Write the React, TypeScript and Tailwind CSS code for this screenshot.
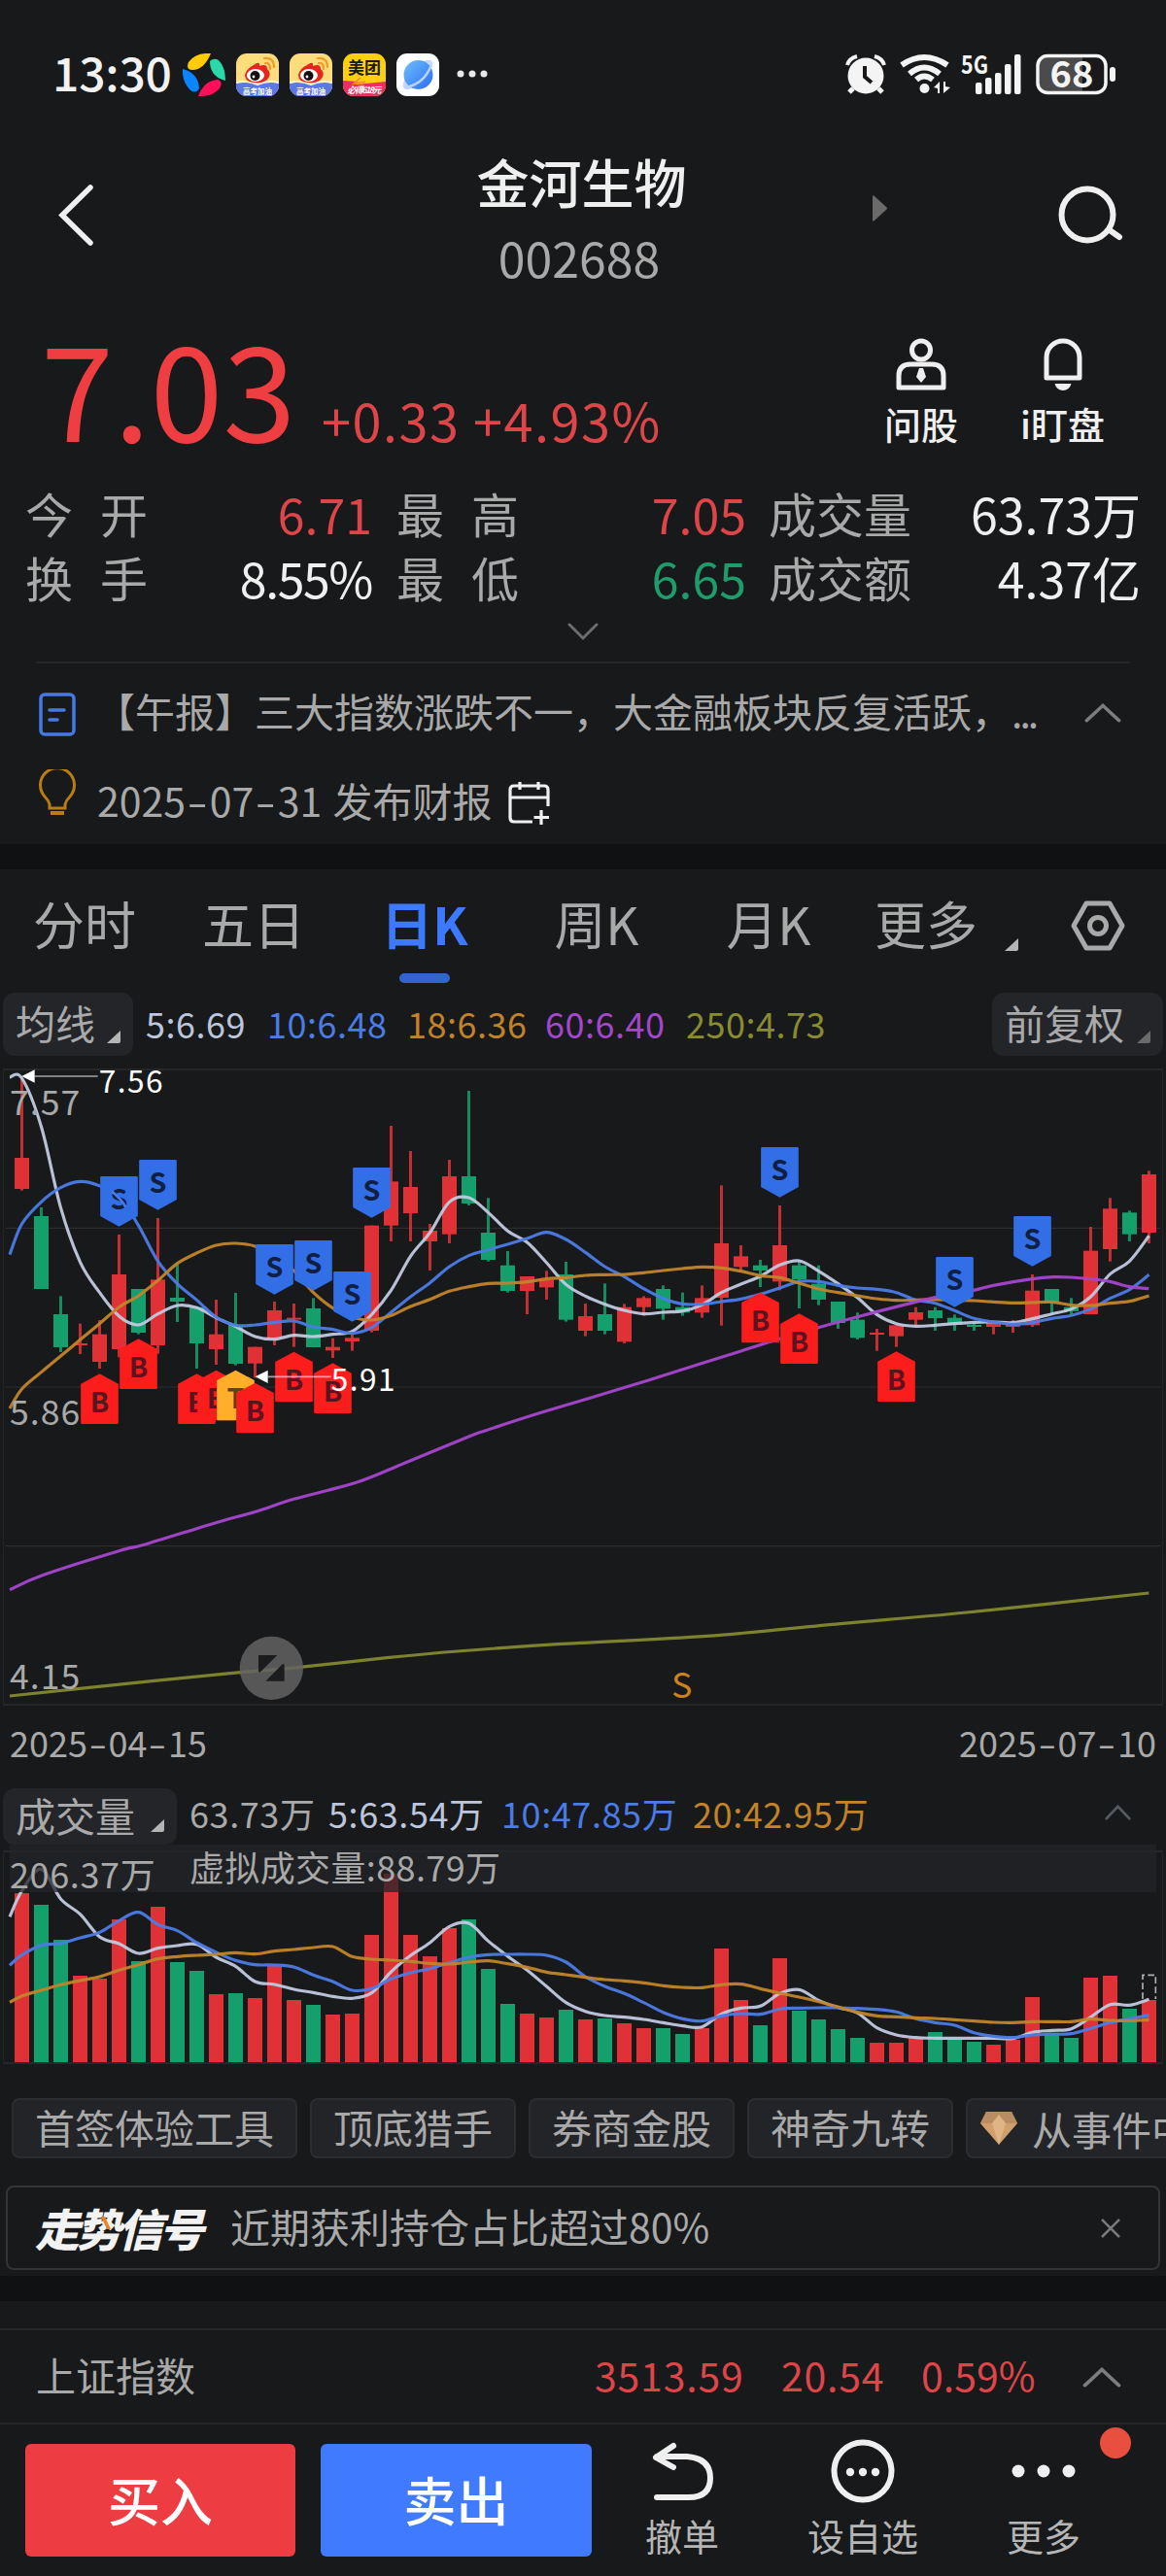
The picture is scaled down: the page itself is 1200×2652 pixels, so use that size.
import React from 'react';

const RED = '#e03236';
const GREEN = '#149f6c';

// Chart units: 3 per CSS pixel, one candle every 60 units
const STEP = 60;
const FIRST = 67.5;
const cx = (i: number) => FIRST + i * STEP;

type Candle = ['r' | 'g', number, number, number, number];

// [colour, high, body top, body bottom, low]
const candles: Candle[] = [
  ['r', 90, 336, 432, 437], ['g', 489, 516, 741, 741], ['g', 763, 819, 921, 936], ['r', 848, 909, 915, 942],
  ['r', 837, 881, 966, 987], ['r', 573, 696, 927, 952], ['g', 741, 741, 876, 881], ['r', 522, 712, 915, 941],
  ['g', 660, 768, 780, 843], ['g', 795, 797, 909, 987], ['r', 774, 881, 927, 975], ['g', 753, 852, 972, 977],
  ['r', 920, 920, 971, 1015], ['r', 780, 807, 893, 915], ['r', 786, 830, 836, 920], ['g', 769, 801, 921, 921],
  ['r', 893, 920, 931, 954], ['r', 880, 892, 903, 932], ['r', 545, 545, 870, 875], ['r', 237, 409, 545, 594],
  ['r', 315, 426, 507, 594], ['r', 540, 561, 594, 684], ['r', 342, 393, 572, 600], ['g', 129, 393, 477, 483],
  ['g', 460, 567, 651, 656], ['g', 624, 668, 747, 752], ['r', 702, 702, 747, 819], ['r', 685, 713, 736, 774],
  ['g', 657, 696, 836, 842], ['r', 786, 825, 870, 887], ['g', 724, 819, 870, 881], ['r', 787, 797, 904, 909],
  ['r', 763, 769, 797, 824], ['g', 730, 741, 802, 836], ['g', 752, 797, 814, 824], ['r', 730, 769, 814, 830],
  ['r', 421, 600, 768, 854], ['r', 606, 640, 673, 690], ['g', 651, 668, 684, 735], ['r', 483, 606, 718, 745],
  ['g', 655, 668, 712, 801], ['g', 668, 725, 774, 791], ['g', 780, 780, 846, 864], ['g', 814, 836, 892, 897],
  ['r', 864, 876, 882, 932], ['r', 850, 853, 887, 920], ['r', 797, 813, 836, 852], ['g', 797, 807, 831, 870],
  ['g', 820, 830, 852, 870], ['g', 840, 852, 858, 870], ['r', 840, 845, 858, 881], ['r', 837, 852, 858, 876],
  ['r', 696, 746, 853, 858], ['g', 741, 741, 785, 820], ['g', 769, 797, 810, 820], ['r', 549, 623, 819, 819],
  ['r', 460, 493, 618, 656], ['g', 499, 505, 572, 594], ['r', 376, 387, 567, 600],
];

// moving averages, first value sits on the left edge of the plot
const ma5 = [87, 90, 240, 490, 658, 752, 825, 852, 818, 792, 799, 830, 857, 888, 896, 884, 888, 881, 872, 820, 745, 640, 567, 472, 459, 505, 562, 597, 660, 727, 763, 788, 807, 818, 813, 809, 790, 752, 726, 702, 667, 654, 686, 725, 768, 820, 848, 856, 853, 848, 844, 843, 845, 833, 818, 803, 765, 695, 655, 577];
const ma10 = [635, 540, 472, 428, 409, 422, 455, 545, 655, 725, 775, 828, 853, 852, 844, 840, 858, 866, 878, 860, 813, 765, 722, 672, 638, 620, 603, 585, 566, 588, 628, 672, 703, 740, 770, 787, 788, 780, 772, 757, 738, 718, 718, 730, 738, 742, 752, 775, 785, 808, 832, 843, 850, 845, 832, 823, 803, 770, 743, 697];
const ma18 = [1110, 1050, 998, 948, 898, 848, 797, 762, 715, 662, 630, 606, 600, 609, 640, 685, 752, 800, 828, 837, 823, 795, 773, 748, 734, 724, 723, 719, 710, 706, 699, 697, 696, 691, 684, 678, 673, 676, 686, 700, 706, 723, 741, 752, 762, 771, 776, 775, 774, 775, 777, 781, 784, 783, 781, 791, 792, 785, 779, 762];
const ma60: [number, number][] = [[30, 1670], [131, 1625], [367, 1550], [448, 1530], [666, 1463], [792, 1428], [907, 1390], [1102, 1338], [1251, 1278], [1440, 1200], [1500, 1178], [1680, 1120], [1930, 1045], [2160, 973], [2290, 932], [2400, 897], [2527, 860], [2647, 827], [2887, 767], [3007, 745], [3067, 730], [3187, 710], [3250, 704], [3307, 705], [3367, 710], [3427, 718], [3487, 734], [3547, 740]];
const ma250: [number, number][] = [[30, 1998], [246, 1975], [689, 1930], [918, 1910], [1194, 1880], [1412, 1860], [1722, 1838], [2181, 1813], [2594, 1775], [2985, 1740], [3547, 1680]];

const volumes = [387, 423, 531, 642, 651, 468, 597, 429, 600, 627, 699, 696, 711, 612, 717, 732, 762, 759, 516, 327, 516, 582, 495, 468, 621, 729, 759, 771, 747, 777, 774, 789, 804, 804, 822, 804, 558, 717, 795, 588, 750, 777, 807, 834, 849, 849, 834, 816, 838, 846, 855, 840, 708, 818, 834, 648, 642, 744, 717];
const vol5 = [460, 380, 313, 405, 452, 522, 543, 573, 557, 549, 545, 585, 613, 660, 669, 684, 694, 706, 712, 695, 630, 580, 540, 490, 480, 535, 582, 625, 675, 725, 752, 765, 770, 777, 787, 797, 800, 760, 742, 736, 697, 685, 718, 740, 757, 803, 825, 833, 835, 835, 835, 835, 836, 817, 811, 806, 770, 731, 733, 715];
const vol10 = [610, 578, 548, 542, 525, 508, 472, 446, 484, 503, 540, 570, 595, 608, 609, 615, 640, 660, 687, 682, 652, 633, 620, 602, 585, 577, 576, 576, 579, 600, 645, 675, 697, 725, 755, 775, 782, 766, 759, 761, 745, 742, 741, 741, 743, 746, 754, 775, 787, 795, 818, 829, 833, 825, 823, 821, 805, 787, 775, 764];
const vol20 = [724, 705, 687, 670, 657, 645, 625, 608, 590, 583, 579, 576, 571, 575, 566, 561, 555, 552, 583, 591, 594, 598, 604, 606, 600, 596, 605, 616, 631, 639, 647, 654, 658, 664, 673, 678, 679, 670, 668, 682, 696, 708, 722, 738, 755, 766, 769, 772, 774, 778, 782, 786, 787, 784, 784, 784, 776, 780, 781, 778];

const marks: { i: number; y: number; t: 'S' | 'B' | 'T' }[] = [
  { i: 5, y: 393, t: 'S' }, { i: 7, y: 342, t: 'S' }, { i: 13, y: 603, t: 'S' }, { i: 15, y: 591, t: 'S' },
  { i: 17, y: 687, t: 'S' }, { i: 18, y: 366, t: 'S' }, { i: 39, y: 303, t: 'S' }, { i: 48, y: 642, t: 'S' },
  { i: 52, y: 516, t: 'S' }, { i: 4, y: 1003, t: 'B' }, { i: 6, y: 895, t: 'B' }, { i: 9, y: 1003, t: 'B' },
  { i: 10, y: 992, t: 'B' }, { i: 11, y: 992, t: 'T' }, { i: 12, y: 1031, t: 'B' }, { i: 14, y: 935, t: 'B' },
  { i: 16, y: 970, t: 'B' }, { i: 38, y: 752, t: 'B' }, { i: 40, y: 817, t: 'B' }, { i: 45, y: 934, t: 'B' },
];

const onCandles = (ys: number[]): [number, number][] => ys.map((y, k) => [k === 0 ? 30 : cx(k - 1), y]);

function smooth(pts: [number, number][]) {
  let d = `M${pts[0][0]} ${pts[0][1]}`;
  for (let k = 0; k < pts.length - 1; k++) {
    const p0 = pts[k - 1] ?? pts[k];
    const p1 = pts[k];
    const p2 = pts[k + 1];
    const p3 = pts[k + 2] ?? p2;
    d += `C${p1[0] + (p2[0] - p0[0]) / 6} ${p1[1] + (p2[1] - p0[1]) / 6} ${p2[0] - (p3[0] - p1[0]) / 6} ${p2[1] - (p3[1] - p1[1]) / 6} ${p2[0]} ${p2[1]}`;
  }
  return d;
}

function Line({ pts, color }: { pts: [number, number][]; color: string }) {
  return <path d={smooth(pts)} fill="none" stroke={color} strokeWidth="9.5" strokeOpacity="0.95" />;
}

function Mark({ i, y, t }: { i: number; y: number; t: 'S' | 'B' | 'T' }) {
  const x = cx(i);
  const sell = t === 'S';
  const fill = sell ? '#326ee6' : t === 'B' ? '#fb1c1c' : '#ffae2b';
  const ink = sell ? '#101f42' : t === 'B' ? '#5a1420' : '#5c431c';
  const d = sell
    ? `M${x - 58} ${y + 4}q0-4 4-4h108q4 0 4 4v119L${x} ${y + 155} ${x - 58} ${y + 123}z`
    : `M${x} ${y}l58 31v120q0 4-4 4h-108q-4 0-4-4v-120z`;
  return (
    <g>
      <path d={d} fill={fill} />
      <text x={x} y={sell ? y + 101 : y + 118} fontSize="86" fontWeight="700" textAnchor="middle" fill={ink}>{t}</text>
    </g>
  );
}

function PriceChart() {
  return (
    <svg className="block h-[670px] w-[1200px]" viewBox="0 21 3600 2010">
      <g stroke="#26272a" fill="none">
        <path d="M10 63H3590M10 2025H3590" strokeWidth="6" />
        <path d="M11 60V2028M3589 60V2028" strokeWidth="3" />
        <path d="M18 553H3582M18 1535H3582" strokeWidth="3" stroke="#323335" />
        <path d="M18 1044H3582" strokeWidth="5" />
      </g>
      {candles.map(([c, hi, top, bot, lo], i) => {
        const fill = c === 'r' ? RED : GREEN;
        return (
          <g key={i} fill={fill}>
            <rect x={cx(i) - 4.5} y={hi} width="9" height={lo - hi} opacity="0.85" />
            <rect x={cx(i) - 22.5} y={top} width="45" height={bot - top} />
          </g>
        );
      })}
      <Line pts={onCandles(ma5)} color="#c1c9df" />
      <Line pts={onCandles(ma10)} color="#4b7be5" />
      <Line pts={onCandles(ma18)} color="#c1842a" />
      <Line pts={ma60} color="#a446cc" />
      <Line pts={ma250} color="#83882f" />
      {marks.map((m) => <Mark key={m.i} {...m} />)}
      <path d="M345 440Q372 460 388 488" fill="none" stroke="#4b7be5" strokeWidth="8" />

      <path d="M107 84H302M827 1012H1022" stroke="#fff" strokeOpacity="0.6" strokeWidth="5" />
      <path d="M67 84L107 64V104zM788 1012L827 992V1032z" fill="#fff" />
      <g fill="#fff" fontSize="95">
        <text x="305" y="134" textLength="198">7.56</text>
        <text x="1022" y="1055" textLength="198">5.91</text>
      </g>
      <g fill="#a9a9a9" fontSize="107">
        <text x="30" y="203" textLength="217">7.57</text>
        <text x="30" y="1162" textLength="217">5.86</text>
        <text x="30" y="1976" textLength="217">4.15</text>
      </g>
      <text x="2073" y="2003" fontSize="108" fill="#c9821f">S</text>

      {/* full screen toggle */}
      <circle cx="838" cy="1912" r="98" fill="#636363" fillOpacity="0.85" />
      <path d="M798 1872h58l-52 52q-6 4-6-4zM878 1952h-58l52-52q6-4 6 4z" fill="#1b1c1d" />
    </svg>
  );
}

function VolumeChart() {
  return (
    <svg className="block h-[227px] w-[1200px]" viewBox="0 237 3600 681">
      <path d="M10 258H3590M10 912H3590" stroke="#26272a" strokeWidth="6" />
      <path d="M11 255V915M3589 255V915" stroke="#26272a" strokeWidth="3" />
      {volumes.map((top, i) => (
        <rect key={i} x={cx(i) - 22.5} y={top} width="45" height={909 - top} fill={candles[i][0] === 'r' ? RED : GREEN} />
      ))}
      <path d="M3528 714V640H3568V714" fill="none" stroke="#b0b0b0" strokeWidth="5" strokeDasharray="20 10" />
      <Line pts={onCandles(vol5)} color="#c1c9df" />
      <Line pts={onCandles(vol10)} color="#4b7be5" />
      <Line pts={onCandles(vol20)} color="#c1842a" />
      <rect x="30" y="237" width="3540" height="147" fill="#232428" fillOpacity="0.75" />
      <g fill="#a9a9a9" fontSize="108">
        <text x="30" y="373" textLength="449">206.37万</text>
        <text x="585" y="350" textLength="960">虚拟成交量:88.79万</text>
      </g>
    </svg>
  );
}

function WeiboIcon() {
  return (
    <svg className="size-11" viewBox="0 0 44 44">
      <rect width="44" height="44" rx="11" fill="#fddc7c" />
      <path d="M0 31q11-3 22 1 11-4 22-1v2a11 11 0 0 1-11 11H11A11 11 0 0 1 0 33z" fill="#5b78e8" />
      <path d="M0 30q11-3 22 2 11-5 22-2" fill="none" stroke="#fff3cf" strokeWidth="2" />
      <path d="M18 12q7-5 6 1 8-3 8 3 4 3 2 8-3 7-14 6-11 0-11-8 2-7 9-10z" fill="#e6251f" />
      <ellipse cx="20" cy="22.500" rx="9" ry="6.500" fill="#fff" />
      <circle cx="19.500" cy="23" r="5" fill="#111" />
      <circle cx="18" cy="24" r="1.400" fill="#fff" />
      <path d="M30 10q5-1 5 6M29 5q10-1 10 9" fill="none" stroke="#f09a2a" strokeWidth="2.200" strokeLinecap="round" />
      <text x="22" y="41.500" fontSize="7.500" fontWeight="700" fill="#fff" textAnchor="middle">高考加油</text>
    </svg>
  );
}

function StatusBar() {
  return (
    <div className="flex h-[146px] items-start pl-[54px] pt-[55px] text-[#f2f2f2]">
      <span className="mt-[-6px] w-[134px] whitespace-nowrap text-[48px] leading-[48px] font-medium tracking-[-0.2px]">13:30</span>
      <div className="flex gap-[11px]">
        <svg className="size-11" viewBox="0 0 44 44">
          <path d="M29 0Q22 17 10 17 3 17 6 9 13-1 29 0z" fill="#ffcc06" />
          <path d="M28 8Q32 4 37 7q7 7 7 21Q28 24 28 8z" fill="#2bd9a8" />
          <path d="M0 16q16 4 17 20 -3 6-9 2Q-1 29 0 16z" fill="#0b84ff" />
          <path d="M16 44q6-16 20-17 6 2 2 9-8 9-22 8z" fill="#ff0f5b" />
        </svg>
        <WeiboIcon />
        <WeiboIcon />
        <svg className="size-11" viewBox="0 0 44 44">
          <rect width="44" height="44" rx="11" fill="#ffd012" />
          <path d="M0 28l15 1-2 3 31-3v4a11 11 0 0 1-11 11H11A11 11 0 0 1 0 33z" fill="#ea2f62" />
          <path d="M18 25l-7 6 12-2-4 3" fill="none" stroke="#ff8a2a" strokeWidth="1.500" />
          <text x="22" y="21" fontSize="17" fontWeight="700" fill="#1c1a12" textAnchor="middle">美团</text>
          <text x="22" y="41" fontSize="9" fontWeight="700" fontStyle="italic" fill="#fff" textAnchor="middle" textLength="35">必得618元</text>
        </svg>
        <svg className="size-11" viewBox="0 0 44 44">
          <defs>
            <linearGradient id="planet" x1="0" y1="0" x2="1" y2="1">
              <stop offset="0" stopColor="#6fc0ff" />
              <stop offset="1" stopColor="#2a6cf0" />
            </linearGradient>
          </defs>
          <rect width="44" height="44" rx="11" fill="#fff" />
          <ellipse cx="22" cy="22" rx="20" ry="8" transform="rotate(-45 22 22)" fill="#c3d8fb" />
          <circle cx="22.500" cy="22" r="15" fill="url(#planet)" />
          <path d="M9 35Q28 32 36 12" fill="none" stroke="#b9d4fb" strokeWidth="2.500" />
        </svg>
      </div>
      <svg className="ml-[18px] mt-[17px] h-2 w-8" viewBox="0 0 32 8" fill="#e8e8e8">
        <circle cx="4" cy="4" r="3.500" /><circle cx="16" cy="4" r="3.500" /><circle cx="28" cy="4" r="3.500" />
      </svg>

      <div className="ml-auto flex pr-[51px]">
        <svg className="h-[42px] w-[42px]" viewBox="0 0 42 42" fill="#f4f4f4">
          <circle cx="21" cy="23" r="18.500" />
          <path d="M2 12q2-7 10-9M30 3q8 2 10 9" fill="none" stroke="#f4f4f4" strokeWidth="4" />
          <path d="M8 36l-4 4M34 36l4 4" stroke="#f4f4f4" strokeWidth="5" />
          <path d="M20 13v11l7 6" fill="none" stroke="#17191a" strokeWidth="4" />
        </svg>
        <svg className="ml-[14px] h-[42px] w-[54px]" viewBox="0 0 54 42">
          <g fill="none" stroke="#f4f4f4" strokeWidth="6">
            <path d="M2 12Q25-4 49 12M10 21Q25 8 41 21M17 27Q25 20 34 27" />
          </g>
          <circle cx="25.500" cy="36" r="5" fill="#f4f4f4" />
          <path d="M35 35l6-6v12h-2v-5zM52 35l-7 6V29h2v5z" fill="#f4f4f4" />
        </svg>
        <svg className="ml-[9px] h-[42px] w-[64px] overflow-visible" viewBox="0 0 64 42" fill="#f4f4f4">
          <text x="0" y="21" fontSize="26" fontWeight="700" textLength="28" lengthAdjust="spacingAndGlyphs">5G</text>
          <rect x="15" y="30" width="6.500" height="12" rx="2" />
          <rect x="25" y="25" width="6.500" height="17" rx="2" />
          <rect x="35" y="20" width="6.500" height="22" rx="2" />
          <rect x="45" y="11" width="6.500" height="31" rx="2" />
          <rect x="55" y="1" width="6.500" height="41" rx="2" />
        </svg>
        <svg className="ml-[13px] h-[42px] w-[83px] overflow-visible" viewBox="0 0 83 42">
          <path d="M11 4H48V40H11Q4 40 4 32V12Q4 4 11 4z" fill="#4b4b4c" />
          <rect x="2" y="2.500" width="70" height="38" rx="10" fill="none" stroke="#f4f4f4" strokeWidth="3.500" />
          <rect x="76" y="14" width="6" height="15" rx="3" fill="#f4f4f4" />
          <text x="37" y="35" fontSize="38" fontWeight="700" fill="#f4f4f4" textAnchor="middle">68</text>
        </svg>
      </div>
    </div>
  );
}

function Header() {
  return (
    <header className="flex h-[158px] items-start">
      <svg className="ml-[58px] mt-[42px] h-[68px] w-[42px]" viewBox="0 0 42 68" fill="none" stroke="#efefef" strokeWidth="5.500" strokeLinecap="round">
        <path d="M35 5L6 33.500 35 62" />
      </svg>
      <div className="ml-[296px] w-[400px] text-center">
        <h1 className="pl-[5px] text-[54px] leading-[82px] font-medium text-[#efefef]">金河生物</h1>
        <p className="text-[50px] leading-[72px] text-[#a9a9a9]">002688</p>
      </div>
      <svg className="ml-[102px] mt-[55px] h-[27px] w-4" viewBox="0 0 16 27">
        <path d="M0 2q0-3 2-1l12 11q2 1.500 0 3L2 26q-2 2-2-1z" fill="#6a6a6a" />
      </svg>
      <svg className="ml-[173px] mt-[39px] h-[72px] w-[72px]" viewBox="0 0 72 72" fill="none" stroke="#efefef" strokeWidth="6" strokeLinecap="round">
        <circle cx="32" cy="36" r="26.500" />
        <path d="M55 52l10 7" />
      </svg>
    </header>
  );
}

function Quote() {
  return (
    <div className="flex h-[184px] items-start pl-[42px] pr-[34px]">
      <div className="flex items-baseline whitespace-nowrap">
        <span className="w-[289px] text-[135px] leading-[184px] text-[#ee3e42]">7.03</span>
        <span className="text-[54px] tracking-[1.5px] text-[#dd4549]">+0.33 +4.93%</span>
      </div>
      <div className="ml-auto flex pt-[44px] text-[38px] leading-[47px] font-medium text-[#efefef]">
        <div className="flex w-[146px] flex-col items-center gap-[10px]">
          <svg className="h-[54px] w-[52px]" viewBox="0 0 52 54" fill="none" stroke="#efefef" strokeWidth="5">
            <circle cx="26" cy="12.500" r="9.500" />
            <path d="M3 51V39Q3 27 15 27H37Q49 27 49 39V51z" strokeLinejoin="round" />
            <path d="M24 31h4l3 9-5 6-5-6z" fill="#efefef" stroke="none" />
          </svg>
          问股
        </div>
        <div className="flex w-[145px] flex-col items-center gap-[10px]">
          <svg className="h-[54px] w-[42px]" viewBox="0 0 42 54" fill="none" stroke="#efefef" strokeWidth="5">
            <path d="M4 41V20a17 17 0 0 1 34 0V41z" strokeLinejoin="round" />
            <path d="M12.500 47h17q-2 7-8.500 7t-8.500-7z" fill="#efefef" stroke="none" />
          </svg>
          i盯盘
        </div>
      </div>
    </div>
  );
}

function Stat({ label, value, tone, className }: { label: string; value: string; tone: string; className: string }) {
  return (
    <div className={`flex items-center justify-between ${className}`}>
      <span className={`flex text-[49px] text-[#a9a9a9] ${label.length === 2 ? 'gap-[28px]' : ''}`}>
        {label.split('').map((ch) => <span key={ch}>{ch}</span>)}
      </span>
      <span className={`text-[50px] ${tone}`}>{value}</span>
    </div>
  );
}

function Stats() {
  const rows = [
    [['今开', '6.71', 'text-[#dd4549]'], ['最高', '7.05', 'text-[#dd4549]'], ['成交量', '63.73万', 'text-[#efefef]']],
    [['换手', '8.55%', 'tracking-[-1.4px] text-[#efefef]'], ['最低', '6.65', 'text-[#1f9c6c]'], ['成交额', '4.37亿', 'text-[#efefef]']],
  ];
  const cols = ['ml-[26px] w-[357px]', 'ml-[25px] w-[360px]', 'ml-[23px] w-[383px]'];
  return (
    <div className="h-[193px] pt-[7px]">
      {rows.map((row, r) => (
        <div key={r} className="flex h-[66px] items-center leading-[66px] whitespace-nowrap">
          {row.map(([label, value, tone], c) => (
            <Stat key={label} label={label} value={value} tone={tone} className={cols[c]} />
          ))}
        </div>
      ))}
      <Chevron className="mx-auto mt-[14px] h-[19px] w-[32px] rotate-180" color="#6d6d6d" />
    </div>
  );
}

function Chevron({ className, color }: { className: string; color: string }) {
  return (
    <svg className={className} viewBox="0 0 32 19" preserveAspectRatio="none" fill="none" stroke={color} strokeWidth="3" strokeLinecap="round">
      <path d="M2 17L16 3 30 17" />
    </svg>
  );
}

function Corner({ className, color }: { className: string; color: string }) {
  return (
    <svg className={className} viewBox="0 0 14 14">
      <path d="M14 1v11q0 2-2 2H0z" fill={color} />
    </svg>
  );
}

// Dates use hyphens about as wide as a digit
function DateText({ value }: { value: string }) {
  const [y, m, d] = value.split('-');
  const dash = <span className="inline-block w-[0.6em] scale-x-150 text-center">-</span>;
  return <span>{y}{dash}{m}{dash}{d}</span>;
}

function News() {
  return (
    <div className="text-[41px] text-[#a9a9a9] whitespace-nowrap">
      <div className="mx-[37px] h-[2px] bg-[#26272a]" />
      <div className="flex h-[100px] items-center pl-10">
        <svg className="mt-1 h-[45px] w-[38px]" viewBox="0 0 38 45" fill="none" stroke="#4679e6" strokeWidth="3.500" strokeLinecap="round">
          <rect x="2" y="2" width="34" height="41" rx="4" />
          <path d="M11 18h15M11 28h8" />
        </svg>
        <span className="mb-[3px] ml-[20px] w-[969px]">【午报】三大指数涨跌不一，大金融板块反复活跃，<span className="tracking-[-3px]">...</span></span>
        <Chevron className="ml-[49px] mt-[1px] h-[21px] w-[38px]" color="#7d7d7d" />
      </div>
      <div className="flex h-[86px] items-center pl-[39px]">
        <svg className="mb-5 h-[48px] w-[40px]" viewBox="0 0 40 48" fill="none" stroke="#b97d14" strokeWidth="3">
          <path d="M12 40V36Q11 32 7 28A17.500 17.500 0 1 1 33 28Q29 32 28 36V40z" />
          <path d="M13 45H27" strokeWidth="4" />
        </svg>
        <span className="mb-[5px] ml-[21px] w-[410px]"><DateText value="2025-07-31" /><span className="ml-[2px]"> 发布财报</span></span>
        <svg className="ml-[12px] mt-[2px] h-[46px] w-[46px]" viewBox="0 0 46 46" fill="none" stroke="#efefef" strokeWidth="3.200">
          <path d="M26 42H7Q3 42 3 38V9Q3 5 7 5H38Q42 5 42 9V26M3 17H42M13 1V9M32 1V9M35 30V45M27.500 37.500H43" />
        </svg>
      </div>
    </div>
  );
}

function Tabs() {
  return (
    <nav className="flex h-[127px] items-start pt-[4px] text-[53px] leading-[103px] text-[#a9a9a9] whitespace-nowrap">
      <span className="w-[174px] text-center">分时</span>
      <span className="w-[174px] text-center">五日</span>
      <span className="flex w-[178px] flex-col items-center font-bold text-[#3d79fd]">
        日K
        <i className="h-[10px] w-[52px] rounded-[5px] bg-[#3065cf]" />
      </span>
      <span className="w-[176px] text-center">周K</span>
      <span className="w-[176px] pl-[2px] text-center">月K</span>
      <span className="w-[150px] text-center">更多</span>
      <Corner className="ml-[6px] mt-[66px] h-[14px] w-[14px]" color="#b5b5b5" />
      <svg className="ml-[54px] mt-[27px] h-[54px] w-[56px]" viewBox="0 0 56 54" fill="none" stroke="#a9a9a9" strokeWidth="5">
        <path d="M16 4H40L53 27 40 50H16L3 27z" strokeLinejoin="round" />
        <circle cx="28" cy="27" r="8.500" />
      </svg>
    </nav>
  );
}

function Averages() {
  return (
    <div className="flex h-[65px] items-center pl-[3px] pr-[3px] text-[36px] whitespace-nowrap">
      <div className="flex h-[65px] w-[134px] items-center rounded-xl bg-[#242529] pl-[13px] text-[41px] text-[#a9a9a9]">
        <span className="mb-1">均线</span>
        <Corner className="ml-[12px] mt-6 size-[14px]" color="#b5b5b5" />
      </div>
      <div className="mb-[3px] flex pl-[13px] tracking-[0.5px]">
        <span className="w-[125px] text-[#bcc5db]">5:6.69</span>
        <span className="w-[144px] text-[#4b7be5]">10:6.48</span>
        <span className="w-[142px] text-[#c1822a]">18:6.36</span>
        <span className="w-[145px] text-[#a446cc]">60:6.40</span>
        <span className="text-[#888c30]">250:4.73</span>
      </div>
      <div className="ml-auto flex h-[65px] w-[176px] items-center rounded-xl bg-[#242529] pl-[13px] text-[41px] text-[#a9a9a9]">
        <span className="mb-1">前复权</span>
        <Corner className="ml-[13px] mt-6 size-[14px]" color="#6a6a6a" />
      </div>
    </div>
  );
}

function VolumeHeader() {
  return (
    <div className="flex h-[58px] items-center pl-[3px] text-[36px] leading-[58px] whitespace-nowrap">
      <div className="flex h-[58px] w-[179px] items-center rounded-xl bg-[#242529] pl-[13px] text-[41px] text-[#a9a9a9]">
        <span className="mb-1">成交量</span>
        <Corner className="ml-[16px] mt-[18px] size-[14px]" color="#b5b5b5" />
      </div>
      <div className="mb-[9px] flex pl-[13px] tracking-[0.6px]">
        <span className="w-[143px] text-[#a9a9a9]">63.73万</span>
        <span className="w-[178px] text-[#bcc5db]">5:63.54万</span>
        <span className="w-[197px] text-[#4b7be5]">10:47.85万</span>
        <span className="text-[#c1822a]">20:42.95万</span>
      </div>
      <Chevron className="ml-auto mr-[36px] mb-[10px] h-[17px] w-[27px]" color="#555a63" />
    </div>
  );
}

function Tools() {
  return (
    <div className="mt-[34px] flex h-[62px] gap-[13px] overflow-hidden pl-3 text-[41px] leading-[54px] text-[#a9a9a9] whitespace-nowrap">
      <span className="w-[294px] shrink-0 rounded-lg border-2 border-[#2c2d31] bg-[#232428] text-center">首签体验工具</span>
      <span className="w-[212px] shrink-0 rounded-lg border-2 border-[#2c2d31] bg-[#232428] text-center">顶底猎手</span>
      <span className="w-[212px] shrink-0 rounded-lg border-2 border-[#2c2d31] bg-[#232428] text-center">券商金股</span>
      <span className="w-[212px] shrink-0 rounded-lg border-2 border-[#2c2d31] bg-[#232428] text-center">神奇九转</span>
      <span className="flex w-[320px] shrink-0 items-center rounded-lg border-2 border-[#2c2d31] bg-[#232428] pl-[13px]">
        <svg className="mr-[15px] h-[34px] w-[38px]" viewBox="0 0 38 34">
          <path d="M6 0H32L38 12 19 34 0 12z" fill="#cf9f6c" />
          <path d="M6 0H32L38 12H0z" fill="#b98d62" />
          <path d="M12 12L19 3 26 12 19 34z" fill="#e0b484" />
        </svg>
        从事件中
      </span>
    </div>
  );
}

function Signal() {
  return (
    <div className="mx-[6px] mt-7 mb-[6px] flex h-[87px] items-center rounded-lg border-2 border-[#333435] pl-[28px] text-[41px] text-[#a9a9a9] whitespace-nowrap">
      <span className="relative w-[201px] text-[46px] font-black tracking-[-3.3px] text-[#f2f2f2] italic">
        走势信号
        <svg className="absolute top-[23px] left-[67px] h-[14px] w-[12px]" viewBox="0 0 12 14">
          <path d="M1 0h4l6 13H7z" fill="#e8842a" />
        </svg>
      </span>
      <span className="mb-1">近期获利持仓占比超过80%</span>
      <svg className="ml-auto mr-[39px] size-5" viewBox="0 0 20 20" stroke="#7a7a7a" strokeWidth="2.500">
        <path d="M1 1L19 19M19 1L1 19" />
      </svg>
    </div>
  );
}

function IndexRow() {
  return (
    <div className="mt-7 flex h-[99px] items-center border-y-2 border-[#26272a] pl-[37px] text-[41px] whitespace-nowrap">
      <span className="mb-1 text-[#a9a9a9]">上证指数</span>
      <span className="mb-1 ml-auto flex text-[#dd4549]">
        <span className="w-[192px] tracking-[0.8px]">3513.59</span>
        <span className="w-[144px] tracking-[0.8px]">20.54</span>
        <span className="w-[166px]">0.59%</span>
      </span>
      <Chevron className="mr-[46px] h-[22px] w-[40px]" color="#7d7d7d" />
    </div>
  );
}

function BottomBar() {
  return (
    <div className="flex h-[156px] items-start pt-5 pl-[26px] whitespace-nowrap">
      <button className="h-[116px] w-[278px] rounded-md bg-[#ee3d42] pb-1 text-[54px] font-medium text-white">买入</button>
      <button className="ml-[26px] h-[116px] w-[279px] rounded-md bg-[#3f7aff] pb-1 text-[54px] font-medium text-white">卖出</button>
      <div className="ml-[23px] flex w-[140px] flex-col items-center text-[38px] leading-[50px] text-[#b5b5b5]">
        <svg className="mt-[-3px] mb-[8px] h-[64px] w-[66px]" viewBox="0 0 66 64" fill="none" stroke="#efefef" strokeWidth="6" strokeLinecap="round" strokeLinejoin="round">
          <path d="M24 5L6 17 24 27M7 16H38Q62 18 62 38T40 58H7" />
        </svg>
        撤单
      </div>
      <div className="ml-[30px] flex w-[172px] flex-col items-center text-[38px] leading-[50px] text-[#b5b5b5]">
        <svg className="mt-[-5px] mb-[8px] size-[66px]" viewBox="0 0 66 66">
          <circle cx="33" cy="33" r="29.500" fill="none" stroke="#efefef" strokeWidth="6" />
          <g fill="#efefef"><circle cx="20" cy="34" r="4.200" /><circle cx="33" cy="34" r="4.200" /><circle cx="46" cy="34" r="4.200" /></g>
        </svg>
        设自选
      </div>
      <div className="relative ml-[20px] flex w-[160px] flex-col items-center text-[38px] leading-[50px] text-[#b5b5b5]">
        <svg className="mt-[-5px] mb-[8px] h-[66px] w-[70px]" viewBox="0 0 70 66" fill="#efefef">
          <circle cx="9" cy="33" r="6.500" /><circle cx="35" cy="33" r="6.500" /><circle cx="61" cy="33" r="6.500" />
        </svg>
        更多
        <i className="absolute top-[-17px] left-[138px] size-8 rounded-full bg-[#e94f3f]" />
      </div>
    </div>
  );
}

export default function App() {
  return (
    <div className="h-[2652px] w-[1200px] overflow-hidden bg-[#17191a] font-['Noto_Sans_CJK_SC',sans-serif]">
      <StatusBar />
      <Header />
      <Quote />
      <Stats />
      <News />
      <div className="h-[26px] bg-[#101113]" />
      <Tabs />
      <Averages />
      <PriceChart />
      <div className="mb-3 flex h-[72px] items-center justify-between pr-[10px] pl-[10px] text-[36px] text-[#a9a9a9]">
        <DateText value="2025-04-15" />
        <DateText value="2025-07-10" />
      </div>
      <VolumeHeader />
      <VolumeChart />
      <Tools />
      <Signal />
      <div className="h-[26px] bg-[#101113]" />
      <IndexRow />
      <BottomBar />
    </div>
  );
}
